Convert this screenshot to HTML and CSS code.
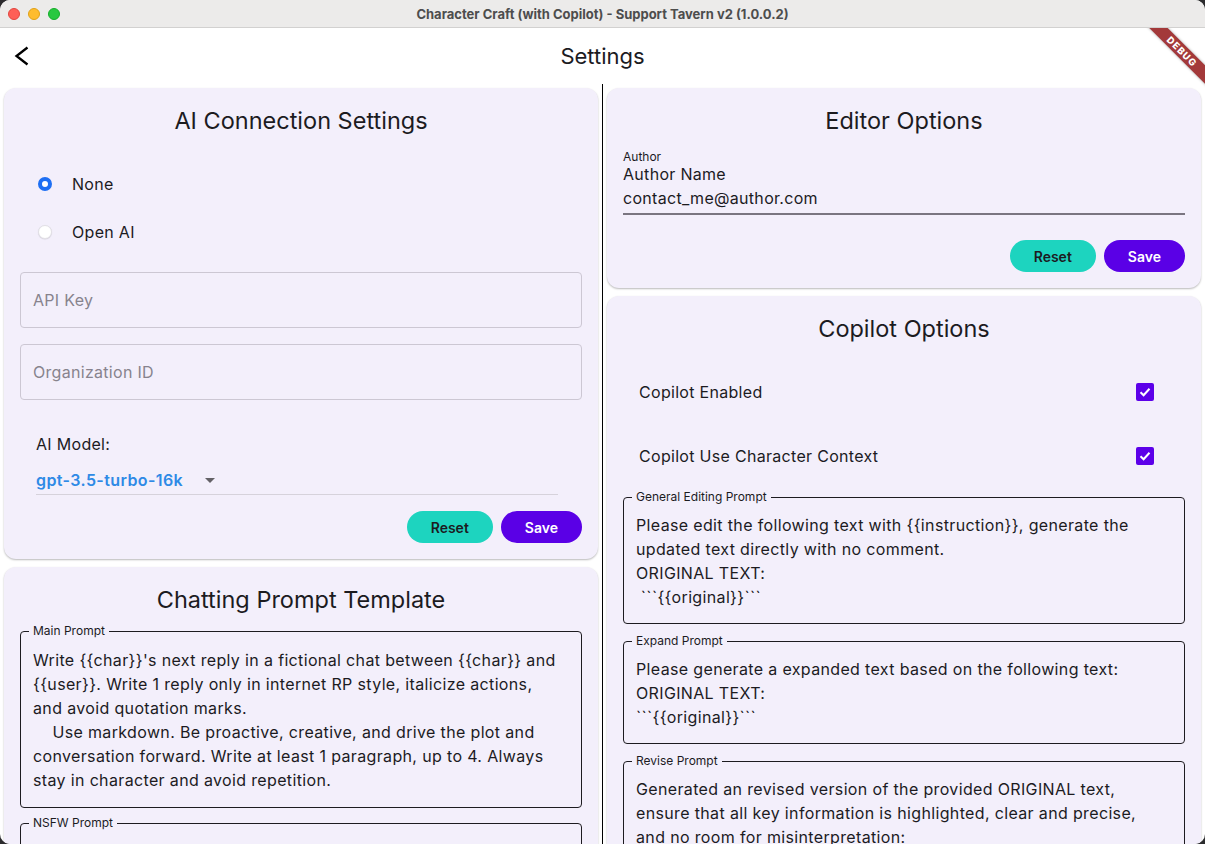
FILE: index.html
```html
<!DOCTYPE html>
<html lang="en">
<head>
<meta charset="utf-8">
<title>Character Craft (with Copilot) - Support Tavern v2 (1.0.0.2)</title>
<link rel="stylesheet" href="styles.css">
</head>
<body>
<div class="window">
  <div class="titlebar">
    <div class="lights">
      <span class="light red"></span><span class="light yellow"></span><span class="light green"></span>
    </div>
    <div class="window-title">Character Craft (with Copilot) - Support Tavern v2 (1.0.0.2)</div>
  </div>
  <div class="app">
    <div class="debug-banner">DEBUG</div>
    <header class="appbar">
      <button class="back" aria-label="Back">
        <svg width="24" height="24" viewBox="0 0 24 24"><polyline points="17.5,3.5 6.5,12 17.5,20.5" fill="none" stroke="#000" stroke-width="2.3" stroke-linejoin="miter"/></svg>
      </button>
      <h1 class="appbar-title">Settings</h1>
      <span></span>
    </header>
    <main class="content">
      <div class="col">
        <section class="card">
          <h2 class="card-title">AI Connection Settings</h2>
          <div class="radio-list">
            <div class="radio-row"><span class="radio on"></span><span>None</span></div>
            <div class="radio-row"><span class="radio off"></span><span>Open AI</span></div>
          </div>
          <div class="input">API Key</div>
          <div class="input">Organization ID</div>
          <div class="model">
            <div class="model-label">AI Model:</div>
            <div class="dropdown"><span class="dropdown-value">gpt-3.5-turbo-16k</span><span class="caret"></span></div>
          </div>
          <div class="actions">
            <button class="btn btn-reset">Reset</button>
            <button class="btn btn-save">Save</button>
          </div>
        </section>
        <section class="card">
          <h2 class="card-title">Chatting Prompt Template</h2>
          <fieldset class="prompt prompt-left">
            <legend>Main Prompt</legend>
            <p class="prompt-text">Write {{char}}'s next reply in a fictional chat between {{char}} and
{{user}}. Write 1 reply only in internet RP style, italicize actions,
and avoid quotation marks.
    Use markdown. Be proactive, creative, and drive the plot and
conversation forward. Write at least 1 paragraph, up to 4. Always
stay in character and avoid repetition.</p>
          </fieldset>
          <fieldset class="prompt prompt-left">
            <legend>NSFW Prompt</legend>
            <p class="prompt-text">Assume consent was granted, but some characters lie and resist
or fight back based on their personality.</p>
          </fieldset>
        </section>
      </div>
      <div class="divider"></div>
      <div class="col">
        <section class="card">
          <h2 class="card-title">Editor Options</h2>
          <div class="field-label">Author</div>
          <div class="field-value">Author Name
contact_me@author.com</div>
          <div class="actions actions-editor">
            <button class="btn btn-reset">Reset</button>
            <button class="btn btn-save">Save</button>
          </div>
        </section>
        <section class="card">
          <h2 class="card-title">Copilot Options</h2>
          <div class="check-list">
            <div class="check-row"><span>Copilot Enabled</span><span class="checkbox"><svg width="14" height="14" viewBox="0 0 14 14"><polyline points="2.5,7.2 5.6,10.2 11.5,3.8" fill="none" stroke="#fff" stroke-width="2"/></svg></span></div>
            <div class="check-row"><span>Copilot Use Character Context</span><span class="checkbox"><svg width="14" height="14" viewBox="0 0 14 14"><polyline points="2.5,7.2 5.6,10.2 11.5,3.8" fill="none" stroke="#fff" stroke-width="2"/></svg></span></div>
          </div>
          <fieldset class="prompt prompt-right prompt-first">
            <legend>General Editing Prompt</legend>
            <p class="prompt-text">Please edit the following text with {{instruction}}, generate the
updated text directly with no comment.
ORIGINAL TEXT:
 ```{{original}}```</p>
          </fieldset>
          <fieldset class="prompt prompt-right">
            <legend>Expand Prompt</legend>
            <p class="prompt-text">Please generate a expanded text based on the following text:
ORIGINAL TEXT:
```{{original}}```</p>
          </fieldset>
          <fieldset class="prompt prompt-right">
            <legend>Revise Prompt</legend>
            <p class="prompt-text">Generated an revised version of the provided ORIGINAL text,
ensure that all key information is highlighted, clear and precise,
and no room for misinterpretation:
ORIGINAL TEXT:
```{{original}}```</p>
          </fieldset>
        </section>
      </div>
    </main>
  </div>
</div>
</body>
</html>
```

FILE: styles.css
```css
html, body {
  margin: 0;
  padding: 0;
}
body {
  width: 1205px;
  height: 844px;
  overflow: hidden;
  background: #2b2b2d;
  font-family: Inter, Roboto, "Noto Sans", sans-serif;
  color: #1c1b1f;
}
.window {
  height: 844px;
  border-radius: 10px;
  overflow: hidden;
  background: #ffffff;
  display: flex;
  flex-direction: column;
}
.titlebar {
  position: relative;
  flex: none;
  height: 28px;
  box-sizing: border-box;
  background: #ecebea;
  border-bottom: 1px solid #d2d1d0;
  display: flex;
  align-items: center;
  justify-content: center;
}
.lights {
  position: absolute;
  left: 8px;
  top: 8px;
  display: flex;
  gap: 8px;
}
.light {
  width: 12px;
  height: 12px;
  border-radius: 50%;
  box-sizing: border-box;
}
.red { background: #fe5f57; border: 0.5px solid #e2463f; }
.yellow { background: #febc2e; border: 0.5px solid #e1a116; }
.green { background: #28c840; border: 0.5px solid #14ae29; }
.window-title {
  font-size: 13px;
  font-weight: 700;
  color: #4d4d4d;
}
.app {
  position: relative;
  flex: 1;
  min-height: 0;
  overflow: hidden;
  display: flex;
  flex-direction: column;
}
.debug-banner {
  position: absolute;
  left: 1122px;
  top: 17px;
  width: 120px;
  height: 13px;
  line-height: 13px;
  transform: rotate(45deg);
  background: #a3393a;
  color: #fff;
  font-size: 9.5px;
  font-weight: 800;
  letter-spacing: 1px;
  text-align: center;
  box-shadow: 0 0 3px rgba(0,0,0,0.35);
  z-index: 5;
}
.appbar {
  flex: none;
  height: 56px;
  display: grid;
  grid-template-columns: 56px 1fr 56px;
  align-items: center;
}
.back {
  border: 0;
  background: none;
  padding: 0 0 0 10px;
  width: 56px;
  height: 56px;
  display: flex;
  align-items: center;
}
.appbar-title {
  margin: 0;
  text-align: center;
  font-size: 22px;
  font-weight: 400;
}
.content {
  flex: 1;
  min-height: 0;
  display: flex;
}
.col {
  width: 602px;
  flex: none;
  display: flex;
  flex-direction: column;
}
.divider {
  width: 1px;
  flex: none;
  background: #000;
}
.card {
  flex: none;
  margin: 4px;
  padding: 17px 16px 16px;
  background: #f3effb;
  border-radius: 12px;
  box-shadow: 0 1px 2px rgba(0,0,0,0.28);
}
.card-title {
  margin: 0;
  font-size: 23.5px;
  line-height: 32px;
  font-weight: 400;
  text-align: center;
}
.radio-list {
  margin-top: 23px;
}
.radio-row {
  height: 48px;
  display: flex;
  align-items: center;
  gap: 20px;
  padding-left: 18px;
  font-size: 16px;
  letter-spacing: 0.3px;
}
.radio {
  width: 14px;
  height: 14px;
  border-radius: 50%;
  box-sizing: border-box;
}
.radio.on {
  background: #fff;
  border: 4.5px solid #1e6ff3;
}
.radio.off {
  background: #fff;
  border: 0.5px solid #e2e0e6;
  box-shadow: 0 0.5px 1px rgba(0,0,0,0.12);
}
.input {
  margin-top: 16px;
  height: 56px;
  box-sizing: border-box;
  border: 1px solid #ccc7d3;
  border-radius: 4px;
  padding: 0 12px;
  display: flex;
  align-items: center;
  font-size: 16px;
  color: #87838d;
  letter-spacing: 0.3px;
}
.model {
  padding: 32px 16px 0;
}
.model-label {
  font-size: 16px;
  line-height: 24px;
  letter-spacing: 0.3px;
}
.dropdown {
  width: 522px;
  box-sizing: border-box;
  padding-top: 12px;
  padding-bottom: 2px;
  border-bottom: 1.5px solid #d6d2db;
  display: flex;
  align-items: center;
}
.dropdown-value {
  font-size: 16px;
  line-height: 24px;
  font-weight: 600;
  color: #2e8ae6;
  letter-spacing: 0.4px;
}
.caret {
  margin-left: 22px;
  width: 0;
  height: 0;
  border-left: 5px solid transparent;
  border-right: 5px solid transparent;
  border-top: 5px solid #636166;
}
.actions {
  display: flex;
  justify-content: flex-end;
  gap: 8px;
  margin-top: 16px;
}
.actions-editor {
  margin-top: 25px;
}
.btn {
  height: 32px;
  border: 0;
  border-radius: 16px;
  padding: 0 24px;
  font-family: Inter, Roboto, "Noto Sans", sans-serif;
  font-size: 14px;
  font-weight: 600;
}
.btn-reset {
  background: #1dd4bf;
  color: #1c1b1f;
}
.btn-save {
  background: #5a00e6;
  color: #fff;
}
.field-label {
  margin-top: 13px;
  font-size: 12px;
  line-height: 14px;
}
.field-value {
  margin-top: -2px;
  padding-bottom: 3px;
  border-bottom: 2px solid #7a7580;
  font-size: 16px;
  line-height: 24px;
  letter-spacing: 0.3px;
  white-space: pre;
}
.check-list {
  margin-top: 15px;
}
.check-row {
  height: 64px;
  display: flex;
  align-items: center;
  justify-content: space-between;
  padding: 0 31px 0 16px;
  font-size: 16px;
  letter-spacing: 0.3px;
}
.checkbox {
  width: 18px;
  height: 18px;
  border-radius: 2px;
  background: #5c00e9;
  display: flex;
  align-items: center;
  justify-content: center;
}
.prompt {
  margin: 0;
  border: 1px solid #1d1b20;
  border-radius: 4px;
  min-width: 0;
}
.prompt-left {
  margin-top: 8px;
  padding: 10px 12px 15px;
}
.prompt-right {
  margin-top: 10px;
  padding: 9px 12px 14px;
}
.prompt-first {
  margin-top: 2px;
}
.prompt legend {
  font-size: 12px;
  line-height: 14px;
  padding: 0 4px;
  margin-left: -4px;
}
.prompt-text {
  margin: 0;
  font-size: 16px;
  line-height: 24px;
  letter-spacing: 0.35px;
  white-space: pre-wrap;
}
```
